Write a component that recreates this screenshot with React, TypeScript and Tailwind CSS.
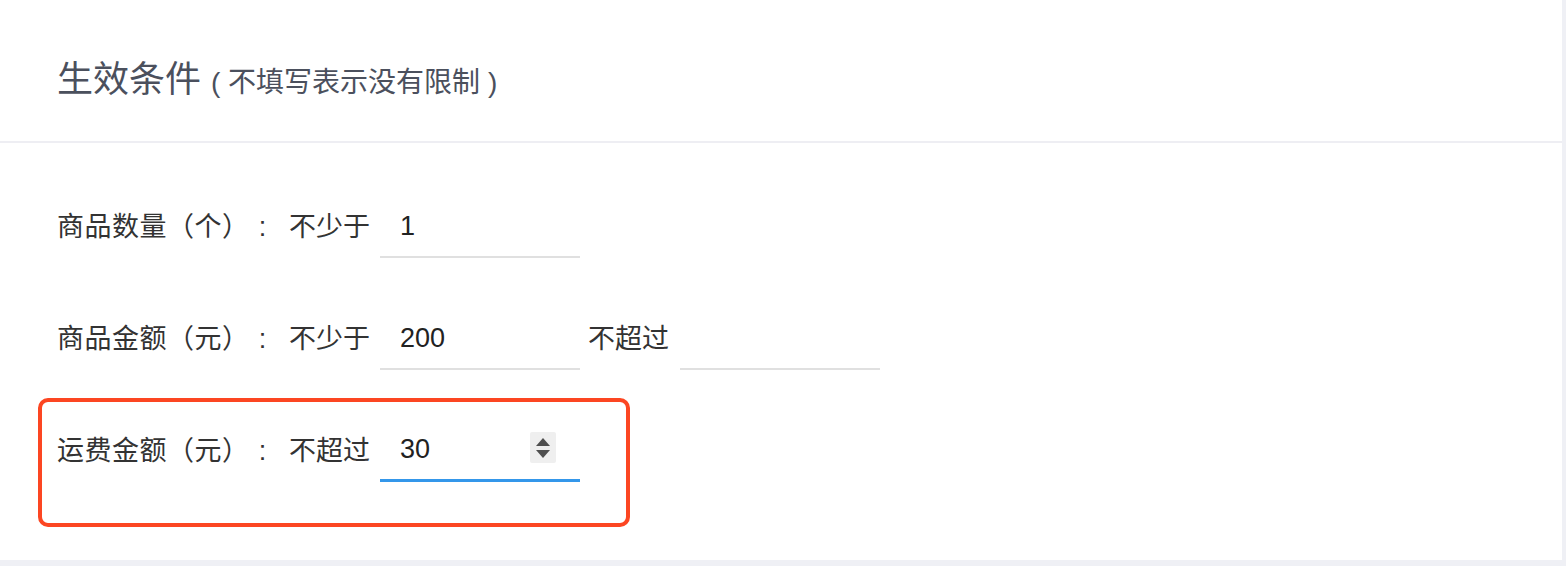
import React from "react"

const cjk = { fontFamily: '"Liberation Sans", "Noto Sans CJK SC", sans-serif' }

function Field({ value, active, spinner }: { value?: string; active?: boolean; spinner?: boolean }) {
  return (
    <div
      className={`relative flex items-center w-[200px] h-[62px] pl-[20px] text-[27px] text-[#222] ${
        active ? "border-b-[3px] border-[#3497ea]" : "border-b-2 border-[#e0e0e0]"
      }`}
    >
      <span>{value}</span>
      {spinner && (
        <div className="absolute right-[24px] top-[12px] w-[26px] h-[31px] bg-[#efefef] rounded-[2px] flex flex-col items-center justify-center gap-[4px]">
          <svg width="14" height="8" viewBox="0 0 14 8">
            <path d="M7 0 L14 8 L0 8 Z" fill="#4f4f4f" />
          </svg>
          <svg width="14" height="8" viewBox="0 0 14 8">
            <path d="M0 0 L14 0 L7 8 Z" fill="#4f4f4f" />
          </svg>
        </div>
      )}
    </div>
  )
}

function Row({ label, children }: { label: string; children: React.ReactNode }) {
  return (
    <div className="flex items-center h-[62px] text-[27px] text-[#333]">
      <div className="w-[232px] flex items-center">
        <span className="tracking-[0.5px]">{label}</span>
        <span className="w-[26px] text-center">:</span>
      </div>
      {children}
    </div>
  )
}

export default function App() {
  return (
    <div className="relative w-[1566px] h-[566px] bg-[#eff0f5] overflow-hidden" style={cjk}>
      <div className="w-[1562px] h-[560px] bg-white">
        <div className="h-[143px] border-b-2 border-[#eeeef3] flex items-baseline pl-[57px] pt-[53px]">
          <span className="text-[36px] text-[#4b505d]">生效条件</span>
          <span className="text-[28px] text-[#4b505d] ml-[10px]">( 不填写表示没有限制 )</span>
        </div>
        <div className="pl-[57px] pt-[53px] flex flex-col gap-[50px]">
          <Row label="商品数量（个）">
            <div className="w-[91px]">不少于</div>
            <Field value="1" />
          </Row>
          <Row label="商品金额（元）">
            <div className="w-[91px]">不少于</div>
            <Field value="200" />
            <div className="w-[100px] pl-[8px]">不超过</div>
            <Field />
          </Row>
          <Row label="运费金额（元）">
            <div className="w-[91px]">不超过</div>
            <Field value="30" active spinner />
          </Row>
        </div>
      </div>
      <div className="absolute left-[38px] top-[398px] w-[592px] h-[129px] border-[4px] border-[#fc4622] rounded-[10px]" />
    </div>
  )
}
